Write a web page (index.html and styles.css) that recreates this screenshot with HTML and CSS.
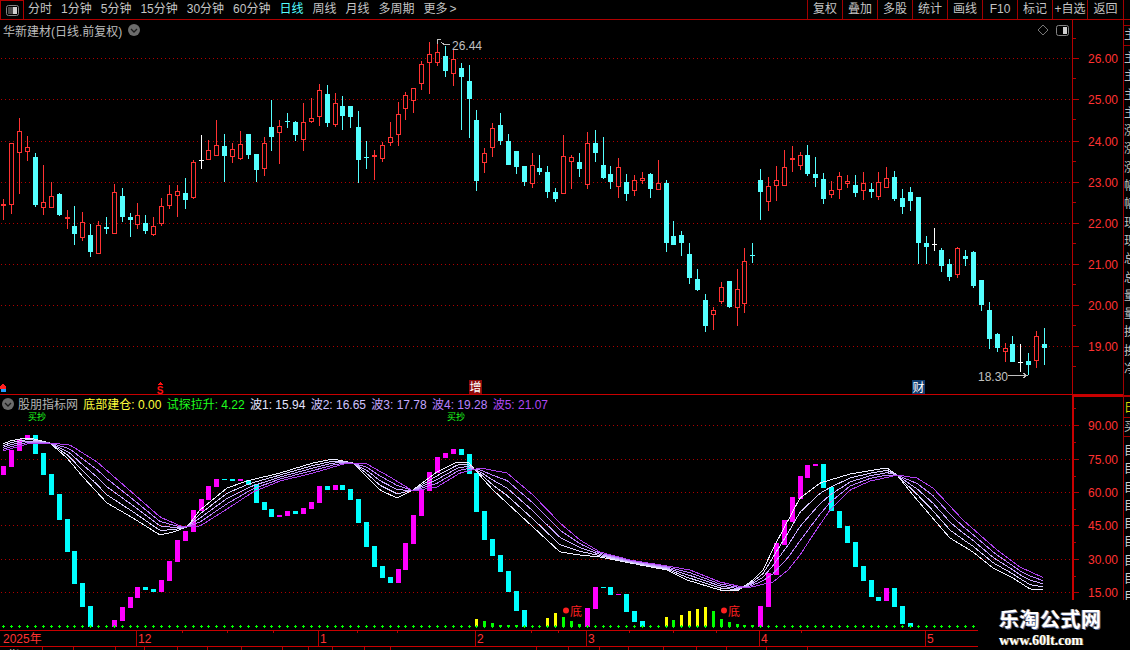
FILE: index.html
```html
<!DOCTYPE html>
<html lang="zh">
<head>
<meta charset="utf-8">
<title>华新建材</title>
<link rel="stylesheet" href="styles.css">
</head>
<body>
<div class="app">
  <header class="toolbar">
    <div class="toggle-box">
      <svg class="panel-icon" width="13" height="11" viewBox="0 0 13 11"><rect x="0.5" y="0.5" width="12" height="10" rx="2" class="icon-frame"/><rect x="2" y="2" width="5" height="7" class="icon-dim"/><rect x="7" y="2" width="4" height="7" class="icon-lit"/></svg>
    </div>
    <nav class="periods">
      <span>分时</span><span>1分钟</span><span>5分钟</span><span>15分钟</span><span>30分钟</span><span>60分钟</span><span class="active">日线</span><span>周线</span><span>月线</span><span>多周期</span><span>更多<i class="chev">&gt;</i></span>
    </nav>
    <nav class="actions">
      <span>复权</span><span>叠加</span><span>多股</span><span>统计</span><span>画线</span><span>F10</span><span>标记</span><span>+自选</span><span class="last">返回</span>
    </nav>
  </header>
  <div class="workspace">
    <main class="stage">
      <section class="pane pane-upper">
        <svg id="upper" class="chart" viewBox="0 20 1123 375"></svg>
        <div class="pane-head">
          <span class="stock-name">华新建材(日线.前复权)</span>
          <svg class="chip" width="12" height="12" viewBox="0 0 12 12"><circle cx="6" cy="6" r="6" class="chip-bg"/><path d="M3 5l3 3 3-3" class="chip-mark"/></svg>
          <span class="head-tools">
            <svg width="12" height="12" viewBox="0 0 12 12"><path d="M6 1l5 5-5 5-5-5z" class="diamond"/></svg>
            <svg width="13" height="11" viewBox="0 0 13 11"><rect x="0.5" y="0.5" width="12" height="10" rx="2" class="icon-frame"/><rect x="7" y="2" width="4" height="7" class="icon-lit"/></svg>
          </span>
        </div>
      </section>
      <section class="pane pane-lower">
        <svg id="lower" class="chart" viewBox="0 395 1123 235"></svg>
        <div class="legend">
          <svg class="legend-chip" width="12" height="12" viewBox="0 0 12 12"><circle cx="6" cy="6" r="6" class="chip-bg"/><path d="M3 5l3 3 3-3" class="chip-mark"/></svg>
          <span class="leg-name">股朋指标网</span>
          <span class="leg-yellow">底部建仓: 0.00</span>
          <span class="leg-green">试探拉升: 4.22</span>
          <span class="leg-w1">波1: 15.94</span>
          <span class="leg-w2">波2: 16.65</span>
          <span class="leg-w3">波3: 17.78</span>
          <span class="leg-w4">波4: 19.28</span>
          <span class="leg-w5">波5: 21.07</span>
        </div>
      </section>
      <svg id="dates" class="date-axis" viewBox="0 630 1123 20"></svg>
    </main>
    <aside class="side">
      <div class="side-top"></div>
      <div class="side-cell side-head">主</div>
      <div class="side-list">
        <span>主</span><span>主</span><span>主</span><span>主</span><span>涨</span><span>涨</span><span>涨</span><span>幅</span><span>幅</span><span>现</span><span>现</span><span>总</span><span>总</span><span>量</span><span>量</span><span>换</span><span>换</span><span>净</span>
      </div>
      <div class="side-yellow">日</div>
      <div class="side-cell side-sub">买</div>
      <div class="side-list side-blocks">
        <span>目</span><span>目</span><span>目</span><span>目</span><span>目</span><span>目</span><span>目</span><span>目</span><span>目</span>
      </div>
    </aside>
  </div>
  <div class="watermark">
    <div class="wm-title">乐淘公式网</div>
    <div class="wm-url">www.60lt.com</div>
  </div>
</div>
<script src="chart.js"></script>
</body>
</html>
```

FILE: styles.css
```css
* { box-sizing: border-box; }
html, body { margin: 0; padding: 0; background: #000; }
body { font-family: "Liberation Sans", "Noto Sans CJK SC", sans-serif; font-size: 12px; color: #c4c4c4; }
svg text { font-family: "Liberation Sans", "Noto Sans CJK SC", sans-serif; }

.app { position: relative; width: 1130px; height: 650px; overflow: hidden; background: #000; }

.toolbar { display: flex; align-items: stretch; height: 20px; border-bottom: 1px solid #b00000; white-space: nowrap; line-height: 19px; }
.toggle-box { width: 24px; padding: 4px 0 0 5px; border-left: 1px solid #b00000; border-top: 1px solid #b00000; border-right: 1px solid #b00000; flex: none; }
.panel-icon { display: block; }
.periods { display: flex; gap: 9px; padding-left: 4px; flex: none; width: 783px; }
.periods .active { color: #54ffff; }
.chev { font-style: normal; margin-left: 2px; }
.actions { display: flex; flex: none; }
.actions span { width: 35px; text-align: center; border-left: 1px solid #a00000; }
.actions .last { width: 37px; border-right: 1px solid #a00000; }

.icon-frame { fill: none; stroke: #858585; }
.icon-dim { fill: #4a4a4a; }
.icon-lit { fill: #d0d0d0; }
.chip-bg { fill: #6c6c6c; }
.chip-mark { fill: none; stroke: #1a1a1a; stroke-width: 1.3; }
.diamond { fill: none; stroke: #777; }

.workspace { display: flex; height: 630px; }
.stage { width: 1123px; flex: none; }
.pane { position: relative; }
.pane-upper { height: 375px; }
.pane-lower { height: 235px; }
.chart { display: block; width: 1123px; height: 100%; shape-rendering: crispEdges; }
.date-axis { display: block; width: 1123px; height: 20px; shape-rendering: crispEdges; }

.pane-head { position: absolute; top: 2px; left: 0; width: 1072px; height: 16px; padding: 0 3px; display: flex; align-items: center; gap: 6px; color: #bcbcbc; }
.head-tools { margin-left: auto; display: flex; align-items: center; gap: 7px; }
.head-tools svg, .chip { display: block; }

.legend { position: absolute; top: 1px; left: 2px; height: 15px; display: flex; align-items: center; gap: 5.3px; white-space: nowrap; }
.legend-chip { display: block; margin-right: -1.3px; }
.leg-name { color: #b4b4b4; }
.leg-yellow { color: #ffff3c; }
.leg-green { color: #1eff1e; }
.leg-w1 { color: #e4e4ff; }
.leg-w2 { color: #d0c4ff; }
.leg-w3 { color: #c4a8ff; }
.leg-w4 { color: #b880ff; }
.leg-w5 { color: #b048f4; }

.side { width: 7px; flex: none; border-left: 1px solid #a00000; overflow: hidden; font-size: 12px; line-height: 18px; color: #c0c0c0; white-space: nowrap; }
.side-top { height: 6px; border-bottom: 1px solid #a00000; }
.side-cell { height: 20px; border-bottom: 1px solid #a00000; }
.side-list span { display: block; height: 18.3px; }
.side-head { margin-bottom: 3px; }
.side-yellow { margin-top: 16.6px; height: 23px; padding-top: 2px; border-top: 2px solid #b00000; border-bottom: 1px solid #a00000; color: #d8d800; }
.side-sub { height: 19px; margin-bottom: 5px; }
.side-blocks { color: #d0d0d0; }

.watermark { position: absolute; left: 978px; top: 600px; width: 152px; height: 50px; background: #000; color: #fff; padding-left: 21px; }
.wm-title { font-family: "Noto Sans CJK SC", sans-serif; font-weight: 700; font-size: 20px; line-height: 22px; letter-spacing: 0.5px; margin-top: 8px; text-shadow: 1px 1px 0 #5a6a9a, -1px 0 0 #8a6a50; }
.wm-url { font-family: "Liberation Serif", serif; font-weight: 700; font-size: 14px; line-height: 16px; margin-top: 3px; text-shadow: 1px 0 0 #8a7a50; }

.axis-label { font-size: 12px; fill: #ff3232; }
.mark-label { font-size: 12px; fill: #c0c0c0; }
.mark-line { fill: none; stroke: #c0c0c0; }
.box-label { font-size: 12px; fill: #fff; }
.red-label { font-size: 12px; fill: #ff2020; }
.sell-label { font-size: 10px; font-weight: 700; fill: #ff1010; }
.hint-label { font-size: 9px; fill: #1eff1e; }
.date-label { font-size: 12px; fill: #ff3232; }
.tab-label { font-size: 12px; fill: #d0d0d0; }
.round-dot { shape-rendering: auto; }
```

FILE: chart.js
```js
// Candle pixels are stored as read from 3x crops: y = origin + value / 3.
var RED = '#ff3232', CYAN = '#54ffff', WHITE = '#ffffff';
var MAG = '#ff00ff', AQUA = '#00ffff', YEL = '#ffff00', GRN = '#00ff00';
var GRID = '#b00000', AXIS = '#b40000', AXIS2 = '#c80000';

var XS = [3,11,19,27,35,43,51,59,67,74,82,90,98,106,114,122,130,137,145,153,161,169,177,185,193,201,208,216,224,232,240,248,256,264,271,279,287,295,303,311,319,327,335,342,350,358,366,374,382,390,398,405,413,421,429,437,445,453,461,469,476,484,492,500,508,516,524,532,539,547,555,563,571,579,587,595,603,610,618,626,634,642,650,658,666,673,681,689,697,705,713,721,729,737,744,752,760,768,776,784,792,800,807,815,823,831,839,847,855,863,871,878,886,894,902,910,918,926,934,941,949,957,965,973,981,989,997,1005,1012,1020,1028,1036,1044];

var candleGroups = [
  { y0: 100, rows: [
    ['R',297,360,312,318],['R',130,342,130,314],['R',54,282,94,160],['R',108,183,142,155],['C',159,320,171,315],
    ['R',195,345,307,323],['R',246,324,289,323],['C',279,348,282,345],['R',330,387,351,357],['C',318,435,378,402],
    ['R',336,423,367,413],['C',372,471,405,456],['R',363,462,376,461],['C',351,402,381,387],['R',252,402,277,401],
    ['C',264,366,288,351],['C',339,411,351,360],['R',309,387,346,376],['C',345,402,369,393],['R',351,408,379,404],
    ['R',294,378,319,371],['R',255,327,283,317],['R',255,351,274,287],['C',234,327,279,300],['R',180,297,187,293],
    ['W',105,207,180,183],['R',120,180,151,179],['R',60,168,136,167],['C',102,246,138,168],['R',129,189,148,170],
    ['R',93,180,133,177],['C',102,177,102,165],['C',162,246,162,210],['R',111,228,130,208],['C',0,153,81,111],
    ['R',60,192,79,98]
  ]},
  { y0: 30, rows: [
    ['C',250,294,273,276],['C',273,333,276,315],['R',219,363,277,330],['R',204,279,265,275],['R',162,288,181,260],
    ['C',165,291,192,279],['R',189,291,220,285],['C',198,300,228,258],['C',228,294,228,261],['C',243,459,291,390],
    ['C',333,417,381,384],['R',360,450,376,381],['R',336,396,346,387],['R',276,348,322,338],['R',216,348,252,315],
    ['R',186,270,196,237],['R',174,249,175,212],['R',93,180,102,161],['R',36,192,73,98],['R',30,108,67,98],
    ['C',48,141,78,123],['R',57,168,88,131],['C',99,300,114,141],['C',105,324,153,207],['C',240,483,270,453],
    ['R',354,429,370,398],['R',279,381,295,353],['C',249,345,285,333],['C',312,405,333,405],['C',363,432,363,411],
    ['C',408,468,408,456],['R',369,474,406,461],['C',375,435,414,426]
  ]},
  { y0: 120, rows: [
    ['C',138,234,156,216],['C',204,246,216,237],['R',45,222,109,221],['R',105,207,112,125],['C',99,171,126,147],
    ['R',36,207,70,194],['C',30,126,69,99],['C',51,177,135,174],['C',138,207,162,186],['R',114,234,142,200],
    ['C',162,243,186,222],['R',165,228,181,213],['R',156,192,175,182],['C',159,234,162,207],['R',120,210,190,209],
    ['C',180,396,189,369],['C',303,375,348,375],['C',333,408,345,369],['C',369,492,402,474],['C',447,513,477,510],
    ['C',522,636,540,618],['R',561,630,571,584],['R',486,552,502,545],['C',483,564,483,561],['R',447,618,508,563],
    ['R',384,579,424,551],['C',369,429,405,408],['C',147,300,180,216],['R',171,273,199,245],['R',138,243,181,197]
  ]},
  { y0: 130, rows: [
    ['R',60,168,112,167],['R',48,126,84,90],['R',66,120,76,107],['C',45,138,75,132],['C',81,171,132,144],
    ['C',129,222,147,207],['R',153,204,181,194],['R',126,207,139,179],['R',135,174,154,161],['C',135,201,165,189],
    ['R',126,210,159,182],['C',159,204,177,186],['R',126,210,157,200],['R',111,174,145,173],['C',123,213,141,207],
    ['C',177,252,204,231],['C',171,243,186,213],['C',201,402,201,339],['C',318,402,339,351],['W',294,363,342,345],
    ['C',354,426,360,408],['C',387,453,402,441],['R',351,444,355,434],['C',360,408,378,387],['C',363,474,366,468],
    ['C',450,543,450,525],['C',516,657,540,627],['C',609,666,612,654],['R',639,696,655,665],['C',618,696,642,696],
    ['W',642,726,696,699],['C',669,735,693,705],['R',603,714,619,692],['C',594,705,642,654]
  ]}
];

// Lines in page pixels; the three in between are interpolated.
var waveFast = [[3,444],[10,441],[20,439],[30,438],[42,441],[50,443],[67,458],[83,477],[107,503],[133,518],[160,535],[173,532],[187,527],[200,510],[227,488],[247,481],[280,473],[313,463],[333,459],[353,463],[380,490],[397,498],[413,490],[437,472],[457,462],[468,462],[493,490],[520,515],[560,552],[580,555],[600,557],[630,563],[667,570],[687,580],[720,590],[737,591],[753,580],[763,570],[775,545],[800,498],[820,483],[850,474],[880,469],[887,468],[897,475],[913,495],[943,530],[950,538],[973,552],[993,568],[1013,578],[1030,589],[1044,590]];
var waveSlow = [[3,451],[27,444],[50,443],[70,445],[97,462],[127,488],[160,517],[183,527],[200,526],[227,509],[253,492],[280,481],[313,473],[347,463],[367,464],[390,477],[413,491],[437,487],[460,473],[480,468],[507,473],[533,495],[560,523],[580,540],[600,552],[630,560],[667,566],[690,570],[720,582],[747,588],[773,582],[788,570],[800,555],[815,532],[830,510],[850,490],[870,481],[880,479],[897,475],[917,478],[933,488],[963,520],[997,550],[1020,567],[1044,578]];
var waveColors = ['#eeeeff','#d8ccff','#c8a8ff','#bc80ff','#b040f0'];

// Bars: [pixel x, colour, top, bottom], y = origin + value / 3
var barGroups = [
  { y0: 420, wide: true, rows: [
    [3,MAG,138,165],[11,MAG,90,141],[19,MAG,57,93],[27,MAG,45,57],[35,AQUA,45,102],[43,AQUA,99,165],[51,AQUA,162,225],[59,AQUA,222,300],[67,AQUA,297,396],[74,AQUA,393,492],[82,AQUA,489,561],[90,AQUA,558,621],
    [114,MAG,600,621],[122,MAG,561,603],[130,MAG,531,564],[137,MAG,501,534],[145,AQUA,501,510],[153,AQUA,507,516],[161,MAG,480,516],[169,MAG,423,483],[177,MAG,360,426],[185,MAG,333,363],[193,MAG,270,336],[201,MAG,237,273],[208,MAG,198,240],[216,MAG,177,201],[224,AQUA,177,180],[232,AQUA,177,183],[240,MAG,177,183],[248,AQUA,180,195],[256,AQUA,192,249],[264,AQUA,246,270],[271,AQUA,267,291],[279,MAG,285,291]
  ]},
  { y0: 430, wide: true, rows: [
    [287,MAG,243,258],[295,AQUA,243,252],[303,MAG,234,252],[311,MAG,216,237],[319,MAG,168,219],[327,AQUA,168,180],[335,MAG,165,180],[342,AQUA,165,180],[350,AQUA,177,210],[358,AQUA,207,279],[366,AQUA,276,351],[374,AQUA,348,411],[382,AQUA,408,444],[390,AQUA,441,459],[398,MAG,417,459],[405,MAG,339,420],[413,MAG,255,342],[421,MAG,180,258],[429,MAG,126,183],[437,MAG,81,129],[445,MAG,69,84],[453,MAG,57,72],[461,AQUA,57,75],[469,AQUA,72,132],[476,AQUA,129,246],[484,AQUA,243,330],[492,AQUA,327,378],[500,AQUA,375,426],[508,AQUA,423,486],[516,AQUA,483,543],[524,AQUA,540,591]
  ]},
  { y0: 570, wide: true, rows: [
    [587,MAG,114,171],[595,MAG,51,117],[603,AQUA,51,54],[610,AQUA,51,75],[618,MAG,72,75],[626,AQUA,72,126],[634,AQUA,123,156],[642,AQUA,153,171],
    [760,MAG,108,171],[768,MAG,10,111]
  ]},
  { y0: 0, wide: true, rows: [
    [776,MAG,1629,1725],[784,MAG,1560,1635],[792,MAG,1491,1566],[800,MAG,1428,1497],[807,MAG,1395,1434],[815,MAG,1392,1398],[823,AQUA,1392,1464],[831,AQUA,1461,1533],[839,AQUA,1533,1584],[847,AQUA,1578,1629],[855,AQUA,1626,1701],[863,AQUA,1698,1743],[871,AQUA,1740,1791],[878,AQUA,1791,1803],[886,MAG,1764,1803],[894,AQUA,1764,1821],[902,AQUA,1818,1872],[910,AQUA,1869,1881]
  ]},
  { y0: 430, wide: false, rows: [
    [476,YEL,567,591],[484,GRN,573,591],[492,GRN,579,591],[500,GRN,584,591],[508,GRN,584,591],[516,GRN,584,591]
  ]},
  { y0: 570, wide: false, rows: [
    [547,YEL,144,171],[555,YEL,130,171],[563,GRN,141,171],[571,GRN,153,171],[579,GRN,161,171],
    [666,YEL,141,171],[673,GRN,150,171],[681,YEL,135,171],[689,YEL,123,171],[697,YEL,117,171],[705,YEL,111,171],[713,GRN,123,171],[721,GRN,147,171],[729,GRN,156,171],[737,GRN,162,171],[744,GRN,164,171],[752,GRN,164,171]
  ]}
];

function rect(x, y, w, h, fill, extra) {
  return '<rect x="' + x + '" y="' + y + '" width="' + w + '" height="' + h + '" fill="' + fill + '"' + (extra || '') + '/>';
}
function text(x, y, str, cls, anchor) {
  return '<text x="' + x + '" y="' + y + '" class="' + cls + '"' + (anchor ? ' text-anchor="' + anchor + '"' : '') + '>' + str + '</text>';
}
function dotted(y) {
  return '<line x1="1" x2="1072" y1="' + (y + 0.5) + '" y2="' + (y + 0.5) + '" stroke="' + GRID + '" stroke-dasharray="1 3"/>';
}
function axisScale(rows, step) {
  var s = '';
  rows.forEach(function (r, i) {
    s += rect(1073, r[0], 6, 1, AXIS);
    s += text(1088, r[0] + 5, r[1], 'axis-label');
    s += rect(1073, r[0] + step, 3, 1, AXIS);
    if (i === 0) s += rect(1073, r[0] - step, 3, 1, AXIS);
  });
  return s;
}

// Upper pane
(function () {
  var s = '';
  var ys = [58, 99, 141, 182, 223, 264, 305, 346];
  ys.forEach(function (y) { s += dotted(y); });
  var i = 0;
  candleGroups.forEach(function (g) {
    g.rows.forEach(function (c) {
      var x = XS[i++];
      var col = c[0] === 'R' ? RED : c[0] === 'C' ? CYAN : WHITE;
      var wt = Math.round(g.y0 + c[1] / 3), wb = Math.round(g.y0 + c[2] / 3);
      var bt = Math.round(g.y0 + c[3] / 3), bb = Math.round(g.y0 + c[4] / 3);
      s += rect(x, wt, 1, wb - wt, col);
      if (c[0] === 'R' && bb - bt > 2) {
        s += rect(x - 2 + 0.5, bt + 0.5, 4, bb - bt - 1, '#000', ' stroke="' + col + '"');
      } else {
        s += rect(x - 2, bt, 5, Math.max(1, bb - bt), col);
      }
    });
  });
  s += '<path class="mark-line" d="M437.5 44V39.5H441M441 42l3 2.5h6"/>';
  s += text(452, 50, '26.44', 'mark-label');
  s += text(978, 381, '18.30', 'mark-label');
  s += '<path class="mark-line" d="M1008 375.5h19M1023 373l4 2.5-4 2.5"/>';
  // event markers
  s += '<polygon points="3,383 6,387 0,387" fill="#ff2020"/>' + rect(0, 387, 6, 2, '#ff2020') + rect(1, 389, 5, 3, '#20a0ff');
  s += '<polygon points="160,382 163,385 157,385" fill="#ff1010"/>';
  s += text(160, 394, 'S', 'sell-label', 'middle');
  s += rect(469, 380, 13, 14, '#8b0a0a') + text(469.5, 392, '增', 'box-label');
  s += rect(912, 380, 13, 14, '#0f3c6e') + text(912.5, 392, '财', 'box-label');
  // axis
  s += rect(1072, 20, 1, 375, AXIS);
  s += axisScale([[58,'26.00'],[99,'25.00'],[141,'24.00'],[182,'23.00'],[223,'22.00'],[264,'21.00'],[305,'20.00'],[346,'19.00']], 20);
  s += rect(0, 394, 1123, 1, AXIS2);
  document.getElementById('upper').innerHTML = s;
})();

// Lower pane
(function () {
  var s = '';
  var ys = [425, 459, 492, 525, 559, 592];
  ys.forEach(function (y) { s += dotted(y); });
  barGroups.forEach(function (g) {
    g.rows.forEach(function (b) {
      var t = Math.round(g.y0 + b[2] / 3), e = Math.round(g.y0 + b[3] / 3);
      if (g.wide) s += rect(b[0] - 2, t, 5, Math.max(1, e - t), b[1]);
      else s += rect(b[0] - 1, t, 3, e - t, b[1]);
    });
  });
  function at(pts, x) {
    for (var i = 1; i < pts.length; i++) {
      if (x <= pts[i][0]) {
        var a = pts[i - 1], b = pts[i];
        return a[1] + (b[1] - a[1]) * (x - a[0]) / (b[0] - a[0]);
      }
    }
    return pts[pts.length - 1][1];
  }
  waveColors.forEach(function (c, k) {
    var p = [];
    for (var x = 3; x <= 1044; x += 2) {
      var y = at(waveFast, x) + (at(waveSlow, x) - at(waveFast, x)) * k / 4;
      p.push(x + ',' + y.toFixed(1));
    }
    s += '<polyline fill="none" stroke="' + c + '" points="' + p.join(' ') + '"/>';
  });
  XS.forEach(function (x) {
    if (x <= 973) s += rect(x - 1, 626, 3, 1, GRN) + rect(x, 625, 1, 3, GRN);
  });
  s += text(28, 420, '买抄', 'hint-label') + text(447, 420, '买抄', 'hint-label');
  [[566, 570], [724, 728]].forEach(function (m) {
    s += '<circle cx="' + m[0] + '" cy="610.5" r="3" fill="#ff2020" class="round-dot"/>';
    s += text(m[1], 616, '底', 'red-label');
  });
  s += rect(1072, 395, 2, 235, AXIS2) + rect(1072, 395, 51, 2, AXIS2);
  s += axisScale([[425,'90.00'],[459,'75.00'],[492,'60.00'],[525,'45.00'],[559,'30.00'],[592,'15.00']], 17);
  document.getElementById('lower').innerHTML = s;
})();

// Date axis
(function () {
  var s = rect(0, 630, 978, 1, AXIS2) + rect(0, 646, 978, 1, AXIS2);
  [[136,'12'],[318,'1'],[475,'2'],[586,'3'],[759,'4'],[925,'5']].forEach(function (d) {
    s += rect(d[0], 631, 1, 15, AXIS);
    s += text(d[0] + 2, 643, d[1], 'date-label');
  });
  s += text(3, 643, '2025年', 'date-label');
  [182,227,273,357,397,531,558,629,673,716,801].forEach(function (x) { s += rect(x, 631, 1, 2, AXIS); });
  [42,73,115,144,177,207,241,282,308,332,364,390,536,568,599,628,663,696,726,766,807].forEach(function (x) { s += rect(x, 647, 1, 3, AXIS); });
  s += text(8, 660, '指', 'tab-label');
  document.getElementById('dates').innerHTML = s;
})();
```
